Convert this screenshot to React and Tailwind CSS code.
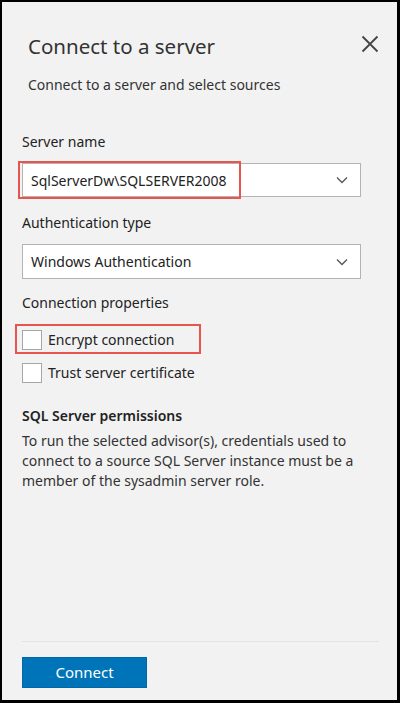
import { useState } from 'react'

const font = { fontFamily: '"Segoe UI", "Noto Sans", "Open Sans", sans-serif' }

const Chevron = () => (
    <svg width="12" height="8" viewBox="0 0 12 8" fill="none" className="text-[#555]">
        <path d="M1 1.5 L6 6.5 L11 1.5" stroke="currentColor" strokeWidth="1.3" />
    </svg>
)

const Select = ({ value, tall }) => (
    <div className={`${tall ? 'h-[35px]' : 'h-[34px]'} w-[339px] bg-white border border-[#b3b3b3] flex items-center justify-between pl-[8px] pr-[12px] text-[14px] text-[#222]`}>
        <span>{value}</span>
        <Chevron />
    </div>
)

const Checkbox = ({ label, checked, onChange }) => (
    <label className="flex items-center gap-[6px] cursor-pointer text-[14px] text-[#222]">
        <span
            onClick={onChange}
            className="w-[20px] h-[20px] bg-white border border-[#a6a6a6] flex items-center justify-center"
        >
            {checked && <span className="w-[9px] h-[9px] bg-[#333]" />}
        </span>
        {label}
    </label>
)

const App = () => {
    const [encrypt, setEncrypt] = useState(false)
    const [trust, setTrust] = useState(false)

    return (
        <div
            style={font}
            className="w-[400px] h-[703px] box-border border-l-2 border-t-2 border-r-[3px] border-b-[3px] border-black bg-[#f2f2f2] flex flex-col"
        >
            <div className="flex items-start justify-between pl-[26px] pr-[18px] pt-[29px]">
                <h1 className="text-[20.5px] leading-[30px] text-[#333] font-normal">Connect to a server</h1>
                <button className="mt-[4px] text-[#444]">
                    <svg width="18" height="18" viewBox="0 0 18 18" fill="none">
                        <path d="M1.5 1.5 L16.5 16.5 M16.5 1.5 L1.5 16.5" stroke="currentColor" strokeWidth="1.8" />
                    </svg>
                </button>
            </div>
            <p className="pl-[26px] mt-[14px] text-[14px] leading-[20px] text-[#333]">Connect to a server and select sources</p>

            <div className="px-[20px] mt-[37px] flex flex-col">
                <div className="text-[14px] leading-[20px] text-[#222]">Server name</div>
                <div className="relative mt-[11px]">
                    <Select value="SqlServerDw\SQLSERVER2008" />
                    <div className="absolute left-[-4px] top-[-2px] w-[223px] h-[38px] border-2 border-[#e8554e]" />
                </div>

                <div className="text-[14px] leading-[20px] text-[#222] mt-[16px]">Authentication type</div>
                <div className="mt-[11px]">
                    <Select value="Windows Authentication" tall />
                </div>

                <div className="text-[14px] leading-[20px] text-[#222] mt-[14px]">Connection properties</div>
                <div className="relative mt-[16px]">
                    <Checkbox label="Encrypt connection" checked={encrypt} onChange={() => setEncrypt(!encrypt)} />
                    <div className="absolute left-[-7px] top-[-5px] w-[186px] h-[30px] border-2 border-[#e8554e]" />
                </div>
                <div className="mt-[12px]">
                    <Checkbox label="Trust server certificate" checked={trust} onChange={() => setTrust(!trust)} />
                </div>

                <div className="mt-[23px] text-[14px] leading-[20px] font-semibold text-[#222]">SQL Server permissions</div>
                <p className="mt-[5px] text-[14px] leading-[20px] text-[#333]">
                    To run the selected advisor(s), credentials used to connect to a source SQL Server instance must be a member of the sysadmin server role.
                </p>
            </div>

            <div className="mt-auto px-[20px] pb-[12px]">
                <div className="h-px bg-[#e3e3e3] mr-[-2px]" />
                <button className="mt-[15px] w-[125px] h-[31px] bg-[#0074b8] border border-[#0068a8] text-white text-[15px] flex items-center justify-center">
                    Connect
                </button>
            </div>
        </div>
    )
}

export default App
